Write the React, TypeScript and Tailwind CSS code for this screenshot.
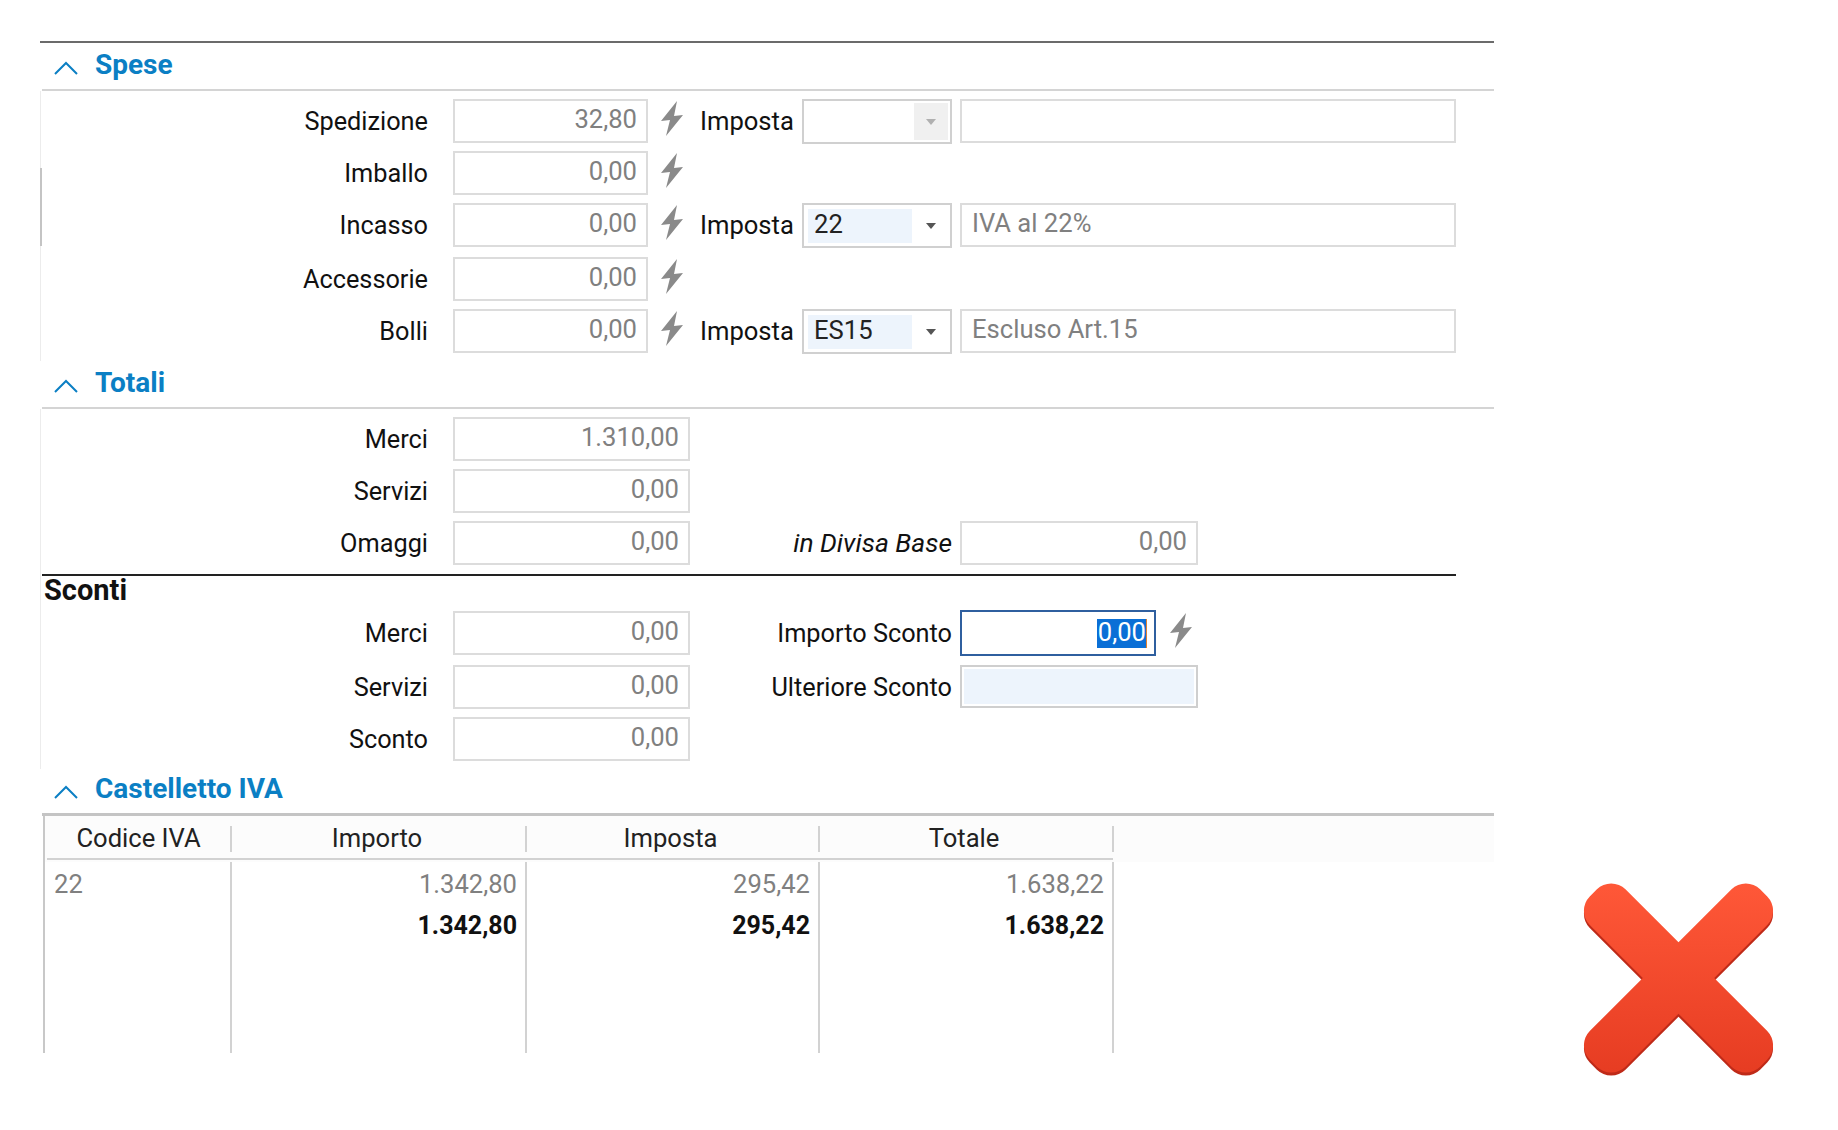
import React from "react";

const FONT = "font-['Roboto',sans-serif]";

function Bolt({ className = "" }: { className?: string }) {
  return (
    <svg width="22" height="35" viewBox="0 0 22 35" className={`shrink-0 ${className}`}>
      <polygon points="16,0 0,20 9,19 5,35 22,14 13,15" fill="#8a8a8a" />
    </svg>
  );
}

function Chevron() {
  return (
    <svg width="24" height="14" viewBox="0 0 24 14" className="ml-[14px] mt-[4px] shrink-0">
      <polyline points="1,13 12,2 23,13" fill="none" stroke="#0b7fc4" strokeWidth="2" />
    </svg>
  );
}

function SectionHeader({ title }: { title: string }) {
  return (
    <div className="relative h-[48px] pb-[2px] flex items-center">
      <Chevron />
      <span className="ml-[17px] text-[28px] font-bold text-[#0b7fc4] leading-none -mt-[2px]">{title}</span>
      <div className="absolute left-[2px] right-0 bottom-0 h-[2px] bg-[#d4d4d4]" />
    </div>
  );
}

function Label({ children, width, italic }: { children: React.ReactNode; width: string; italic?: boolean }) {
  return (
    <div className={`${width} h-[44px] shrink-0 flex items-center justify-end pt-[1px] ${italic ? "text-[26.4px] italic" : "text-[25.3px]"} text-[#111] whitespace-nowrap`}>
      {children}
    </div>
  );
}

function Field({ value, width }: { value?: string; width: string }) {
  return (
    <div className={`${width} h-[44px] shrink-0 border-2 border-[#dcdcdc] bg-white flex items-center justify-end pr-[9px] pb-[2px] text-[25.6px] text-[#808080] leading-none`}>
      {value}
    </div>
  );
}

function Combo({ value, disabled }: { value?: string; disabled?: boolean }) {
  return (
    <div className="w-[150px] h-[45px] shrink-0 ml-[9px] border-2 border-[#d0d0d0] bg-white flex items-center pl-[4px] pr-[2px]">
      {value ? (
        <div className="w-[104px] h-[34px] bg-[#edf4fc] flex items-center pl-[6px] pb-[2px] text-[25.6px] text-[#222] leading-none">{value}</div>
      ) : (
        <div className="w-[104px] h-[34px]" />
      )}
      <div className={`ml-[2px] w-[34px] h-[37px] flex items-center justify-center ${disabled ? "bg-[#f0f0f0]" : ""}`}>
        <svg width="10" height="6" viewBox="0 0 10 6">
          <polygon points="0,0 10,0 5,6" fill={disabled ? "#b0b0b0" : "#555555"} />
        </svg>
      </div>
    </div>
  );
}

function Desc({ value }: { value?: string }) {
  return (
    <div className="w-[496px] h-[44px] shrink-0 ml-[8px] border-2 border-[#dcdcdc] bg-white flex items-center pl-[10px] pb-[2px] text-[25.6px] text-[#808080] leading-none">
      {value}
    </div>
  );
}

function SpeseRow({ label, value, height, tax, desc, disabled }: { label: string; value: string; height: string; tax?: string; desc?: string; disabled?: boolean }) {
  return (
    <div className={`${height} flex items-start`}>
      <Label width="w-[387px]">{label}</Label>
      <Field value={value} width="w-[195px] ml-[25px]" />
      <Bolt className="ml-[13px] mt-[2px]" />
      {(tax !== undefined || disabled) && (
        <>
          <div className="ml-[17px] h-[44px] w-[93px] shrink-0 flex items-center pt-[1px] text-[25.6px] text-[#111]">Imposta</div>
          <Combo value={tax} disabled={disabled} />
          <Desc value={desc} />
        </>
      )}
    </div>
  );
}

function Col({ width, rows, align = "right", pad = "pr-[8px]" }: { width: string; rows: [string, string]; align?: string; pad?: string }) {
  return (
    <div className={`${width} h-[191px] shrink-0 border-r-2 border-[#d2d2d2] ${pad} pt-[1px] ${align === "left" ? "text-left" : "text-right"}`}>
      <div className="h-[42px] leading-[42px] text-[25.6px] text-[#808080]">{rows[0]}</div>
      <div className="h-[42px] leading-[42px] text-[25px] font-bold text-[#111]">{rows[1]}</div>
    </div>
  );
}

function Head({ width, label }: { width: string; label: string }) {
  return (
    <div className={`${width} h-[26px] shrink-0 border-r-2 border-[#d2d2d2] flex items-center justify-center pb-[2px] text-[25.6px] text-[#222]`}>
      {label}
    </div>
  );
}

export default function App() {
  return (
    <div className={`relative w-[1838px] h-[1130px] overflow-hidden bg-white pt-[41px] pl-[40px] ${FONT}`}>
      <div className="w-[1454px]">
        <div className="h-[2px] bg-[#6b6b6b]" />

        <SectionHeader title="Spese" />
        <div className="relative pt-[8px] border-l border-[#ececec]">
          <div className="absolute left-[-1px] top-[77px] h-[78px] w-[2px] bg-[#c4c4c4]" />
          <SpeseRow label="Spedizione" value="32,80" height="h-[52px]" disabled />
          <SpeseRow label="Imballo" value="0,00" height="h-[52px]" />
          <SpeseRow label="Incasso" value="0,00" height="h-[54px]" tax="22" desc="IVA al 22%" />
          <SpeseRow label="Accessorie" value="0,00" height="h-[52px]" />
          <SpeseRow label="Bolli" value="0,00" height="h-[52px]" tax="ES15" desc="Escluso Art.15" />
        </div>

        <SectionHeader title="Totali" />
        <div className="pt-[8px] border-l border-[#ececec]">
          <div className="h-[52px] flex items-start">
            <Label width="w-[387px]">Merci</Label>
            <Field value="1.310,00" width="w-[237px] ml-[25px]" />
          </div>
          <div className="h-[52px] flex items-start">
            <Label width="w-[387px]">Servizi</Label>
            <Field value="0,00" width="w-[237px] ml-[25px]" />
          </div>
          <div className="h-[53px] flex items-start">
            <Label width="w-[387px]">Omaggi</Label>
            <Field value="0,00" width="w-[237px] ml-[25px]" />
            <Label width="w-[262px]" italic>in Divisa Base</Label>
            <Field value="0,00" width="w-[238px] ml-[8px]" />
          </div>
          <div className="h-[2px] w-[1414px] ml-[1px] bg-[#222]" />
          <div className="h-[35px] flex items-center pb-[7px] ml-[3px] text-[29px] font-bold text-[#111] leading-none">Sconti</div>
          <div className="h-[54px] flex items-start">
            <Label width="w-[387px]">Merci</Label>
            <Field value="0,00" width="w-[237px] ml-[25px]" />
            <Label width="w-[262px]">Importo Sconto</Label>
            <div className="w-[196px] h-[46px] ml-[8px] -mt-[1px] shrink-0 border-2 border-[#2f5f9f] bg-white flex items-center justify-end pr-[7px]">
              <span className="relative h-[29px] flex items-center px-[1px] bg-[#0a6fd6] text-white text-[25.6px] leading-none">
                0,00
                <span className="absolute right-0 top-0 h-full w-[1px] bg-[#e08030]" />
              </span>
            </div>
            <Bolt className="ml-[14px] mt-[2px]" />
          </div>
          <div className="h-[52px] flex items-start">
            <Label width="w-[387px]">Servizi</Label>
            <Field value="0,00" width="w-[237px] ml-[25px]" />
            <Label width="w-[262px]">Ulteriore Sconto</Label>
            <div className="w-[238px] h-[43px] ml-[8px] shrink-0 border-2 border-[#cfcfcf] bg-white p-[2px]">
              <div className="w-full h-full bg-[#edf4fc]" />
            </div>
          </div>
          <div className="h-[52px] flex items-start">
            <Label width="w-[387px]">Sconto</Label>
            <Field value="0,00" width="w-[237px] ml-[25px]" />
          </div>
        </div>

        <div className="relative h-[47px] pb-[5px] flex items-center">
          <Chevron />
          <span className="ml-[17px] text-[28px] font-bold text-[#0b7fc4] leading-none -mt-[2px]">Castelletto IVA</span>
          <div className="absolute left-[2px] right-0 bottom-0 h-[3px] bg-[#c4c4c4]" />
        </div>
        <div className="ml-[3px] border-l-2 border-[#c8c8c8]">
          <div className="h-[46px] bg-[#fcfcfc] pt-[10px]">
            <div className="flex">
              <Head width="w-[187px] pl-[2px]" label="Codice IVA" />
              <Head width="w-[295px] pr-[3px]" label="Importo" />
              <Head width="w-[293px] pr-[4px]" label="Imposta" />
              <Head width="w-[294px] pr-[4px]" label="Totale" />
            </div>
            <div className="mt-[6px] ml-[2px] h-[2px] w-[1066px] bg-[#d2d2d2]" />
          </div>
          <div className="flex">
            <Col width="w-[187px]" rows={["22", ""]} align="left" pad="pl-[9px]" />
            <Col width="w-[295px]" rows={["1.342,80", "1.342,80"]} />
            <Col width="w-[293px]" rows={["295,42", "295,42"]} />
            <Col width="w-[294px]" rows={["1.638,22", "1.638,22"]} />
          </div>
        </div>
      </div>

      <svg width="240" height="240" viewBox="0 0 240 240" className="absolute left-[1570px] top-[860px]">
        <defs>
          <linearGradient id="xg" x1="0" y1="-95" x2="0" y2="95" gradientUnits="userSpaceOnUse">
            <stop offset="0" stopColor="#ff5838" />
            <stop offset="1" stopColor="#e63c22" />
          </linearGradient>
        </defs>
        <path
          fill="#bf2a18"
          transform="translate(108.5 121) scale(1.02)"
          d="M-35 0 L-87 -52 A20 20 0 0 1 -87 -80 L-80 -87 A20 20 0 0 1 -52 -87 L0 -35 L52 -87 A20 20 0 0 1 80 -87 L87 -80 A20 20 0 0 1 87 -52 L35 0 L87 52 A20 20 0 0 1 87 80 L80 87 A20 20 0 0 1 52 87 L0 35 L-52 87 A20 20 0 0 1 -80 87 L-87 80 A20 20 0 0 1 -87 52 Z"
        />
        <path
          fill="url(#xg)"
          transform="translate(108.5 118) scale(1.02)"
          d="M-35 0 L-87 -52 A20 20 0 0 1 -87 -80 L-80 -87 A20 20 0 0 1 -52 -87 L0 -35 L52 -87 A20 20 0 0 1 80 -87 L87 -80 A20 20 0 0 1 87 -52 L35 0 L87 52 A20 20 0 0 1 87 80 L80 87 A20 20 0 0 1 52 87 L0 35 L-52 87 A20 20 0 0 1 -80 87 L-87 80 A20 20 0 0 1 -87 52 Z"
        />
      </svg>
    </div>
  );
}
